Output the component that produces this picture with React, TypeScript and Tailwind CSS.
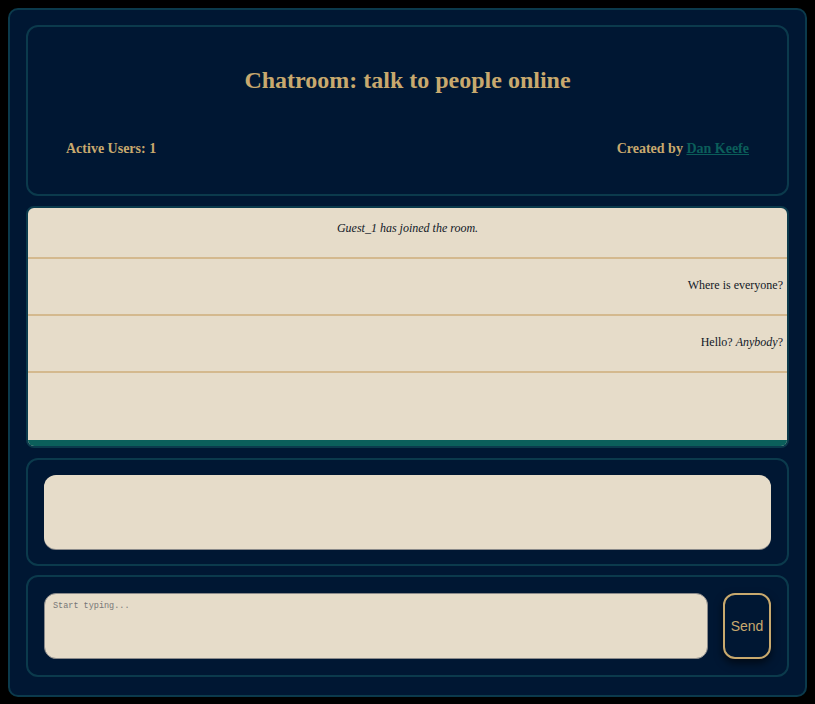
export default function App() {
  return (
    <div className="min-h-[704px] w-full bg-black pt-2 pb-[7px] px-2 font-['Liberation_Serif',serif]">
      <div className="flex flex-col h-[689px] rounded-[10px] border-2 border-[#0b3a4c] bg-[#001733] px-4 pt-[15px] pb-[18px]">
        {/* header */}
        <div className="h-[171px] shrink-0 rounded-[12px] border-2 border-[#0b3a4c] pt-[39px]">
          <h1 className="text-center text-[24px] leading-[28px] font-bold text-[#c8a96e]">
            Chatroom: talk to people online
          </h1>
          <div className="mt-[45px] flex justify-between px-[38px] text-[14px] leading-[20px] font-bold text-[#c8a96e]">
            <span>Active Users: 1</span>
            <span>
              Created by{" "}
              <a href="#" className="text-[#0b5e5a] underline">
                Dan Keefe
              </a>
            </span>
          </div>
        </div>

        {/* messages */}
        <div className="mt-[10px] flex h-[242px] shrink-0 flex-col overflow-hidden rounded-lg border-2 border-[#0b3a4c] bg-[#e6dcc9]">
          <div className="flex-1 overflow-hidden text-[12px] text-[#111827]">
            <div className="flex h-[51px] items-center justify-center border-b-2 border-[#d4b98e] pb-[10px] italic">
              Guest_1 has joined the room.
            </div>
            <div className="flex h-[57px] items-center justify-end border-b-2 border-[#d4b98e] pr-1 pb-[3px]">
              Where is everyone?
            </div>
            <div className="flex h-[57px] items-center justify-end border-b-2 border-[#d4b98e] pr-1 pb-[3px]">
              <span>
                Hello? <i>Anybody</i>?
              </span>
            </div>
          </div>
          <div className="h-[6px] bg-[#0b5f5b]" />
        </div>

        {/* users panel */}
        <div className="mt-[10px] shrink-0 rounded-[12px] border-2 border-[#0b3a4c] px-4 py-[15px]">
          <div className="h-[74px] rounded-[12px] bg-[#e6dcc9] shadow-[0_1px_0_#8a8a8a]" />
        </div>

        {/* input */}
        <div className="mt-[9px] flex shrink-0 items-stretch gap-[15px] rounded-[12px] border-2 border-[#0b3a4c] p-4">
          <textarea
            placeholder="Start typing..."
            className="h-[66px] flex-1 resize-none rounded-[12px] border border-[#8a8a8a] bg-[#e6dcc9] px-2 py-[6px] font-['Liberation_Mono',monospace] text-[8.5px] text-[#333] placeholder:text-[#777] outline-none"
          />
          <button className="h-[66px] w-[48px] rounded-[12px] border-2 border-[#c8a96e] bg-[#001733] font-['Liberation_Sans',sans-serif] text-[14px] text-[#c8a96e] shadow-[0_4px_8px_rgba(0,0,0,0.6)]">
            Send
          </button>
        </div>
      </div>
    </div>
  );
}
